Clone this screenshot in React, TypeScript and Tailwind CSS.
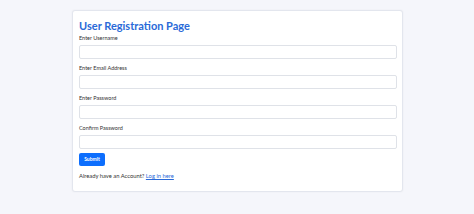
export default function App() {
  const fields = ["Enter Username", "Enter Email Address", "Enter Password", "Confirm Password"];

  return (
    <div className="min-h-screen w-full bg-[#f5f6fb] pt-[10px] pl-[72px]" style={{ fontFamily: 'Lato, "Open Sans", sans-serif' }}>
      <div className="w-[331px] h-[182px] bg-white border border-[#e3e6ee] rounded-[3px] shadow-[0_0_2px_rgba(0,0,0,0.06)] px-[6px] pt-[9px]">
        <h1 className="text-[11px] leading-[12px] font-bold text-[#2a6ad8]">User Registration Page</h1>
        <form className="flex flex-col mt-[2px]" onSubmit={(e) => e.preventDefault()}>
          {fields.map((f) => (
            <div key={f} className="flex flex-col mb-[5px]">
              <label className="text-[5.5px] leading-[8px] text-[#333] mb-[3px]">{f}</label>
              <input
                type={f.includes("Password") ? "password" : "text"}
                className="h-[14px] w-[318px] border border-[#dfe2e8] rounded-[2px] bg-white"
              />
            </div>
          ))}
          <button className="self-start mt-[-1px] w-[26px] h-[13px] rounded-[2px] bg-[#0d6efd] text-white text-[5px] font-bold leading-none">
            Submit
          </button>
          <p className="mt-[6px] text-[5.8px] leading-[8px] text-[#333]">
            Already have an Account? <a className="text-[#2a6ad8] underline">Log in here</a>
          </p>
        </form>
      </div>
    </div>
  );
}
